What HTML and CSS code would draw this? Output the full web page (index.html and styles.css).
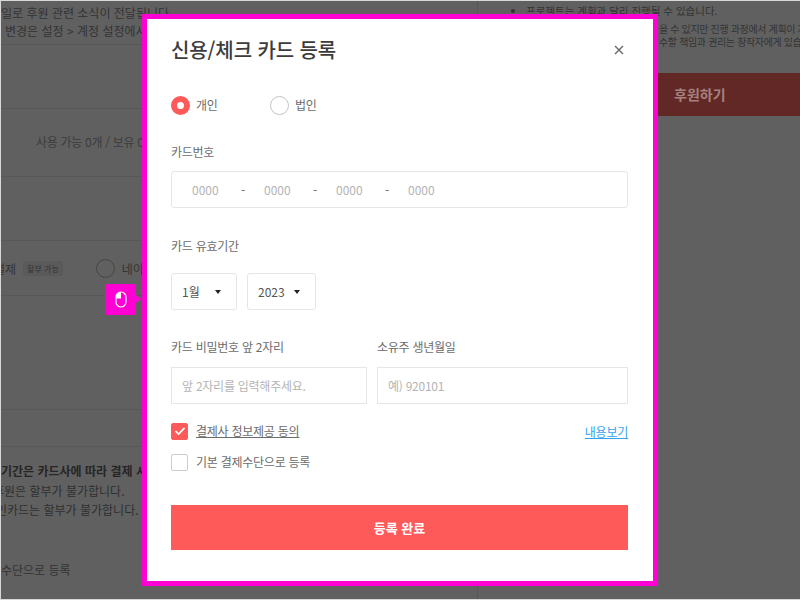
FILE: index.html
```html
<!DOCTYPE html>
<html lang="ko">
<head>
<meta charset="utf-8">
<title>신용/체크 카드 등록</title>
<link rel="stylesheet" href="styles.css">
</head>
<body>
<div class="page">
  <div class="left">
    <div class="row row-notice">
      <p>일로 후원 관련 소식이 전달됩니다.</p>
      <p class="indent">변경은 설정 &gt; 계정 설정에서 가</p>
    </div>
    <div class="row row-blank"></div>
    <div class="row row-coupon">사용 가능 0개 / 보유 0</div>
    <div class="row row-blank2"></div>
    <div class="row row-pay">
      <span class="pay-name pay-clip">결제</span>
      <span class="pay-tag">할부 가능</span>
      <span class="pay-radio"></span>
      <span class="pay-name">네이</span>
    </div>
    <div class="row row-empty"></div>
    <div class="row row-thin"></div>
    <div class="row-info">
      <p class="strong">기간은 카드사에 따라 결제 시</p>
      <p class="clip-a">후원은 할부가 불가합니다.</p>
      <p class="clip-b">인카드는 할부가 불가합니다.</p>
    </div>
    <p class="register">수단으로 등록</p>
  </div>
  <div class="right">
    <ul class="right-list">
      <li>프로젝트는 계획과 달리 진행될 수 있습니다.</li>
    </ul>
    <p class="right-note">을 수 있지만 진행 과정에서 계획이 지</p>
    <p class="right-note">수할 책임과 권리는 창작자에게 있습니</p>
    <div class="back-btn"><span>후원하기</span></div>
  </div>
</div>

<div class="badge">
  <svg width="12" height="17" viewBox="0 0 12 17" fill="none">
    <rect x="1" y="1" width="10" height="15" rx="5" stroke="#fff" stroke-width="1.2"/>
    <path d="M6 1 A5 5 0 0 0 1 6 V7.5 H6 Z" fill="#fff"/>
  </svg>
</div>

<div class="modal">
  <div class="modal-head">
    <h1 class="title">신용/체크 카드 등록</h1>
    <svg class="close" width="10" height="10" viewBox="0 0 10 10">
      <path d="M1 1 L9 9 M9 1 L1 9" stroke="#666" stroke-width="1.4"/>
    </svg>
  </div>

  <div class="radios">
    <span class="radio-item radio-first"><span class="radio on"></span>개인</span>
    <span class="radio-item"><span class="radio"></span>법인</span>
  </div>

  <div class="label label-card">카드번호</div>
  <div class="card-box">
    <span class="digits">0000</span><span class="dash">-</span>
    <span class="digits">0000</span><span class="dash">-</span>
    <span class="digits">0000</span><span class="dash">-</span>
    <span class="digits">0000</span>
  </div>

  <div class="label label-exp">카드 유효기간</div>
  <div class="selects">
    <div class="select select-m"><span>1월</span><i class="caret"></i></div>
    <div class="select select-y"><span>2023</span><i class="caret"></i></div>
  </div>

  <div class="pair">
    <div class="pair-a">
      <div class="label">카드 비밀번호 앞 2자리</div>
      <div class="input">앞 2자리를 입력해주세요.</div>
    </div>
    <div class="pair-b">
      <div class="label">소유주 생년월일</div>
      <div class="input">예) 920101</div>
    </div>
  </div>

  <div class="check-row check-first">
    <span class="check on">
      <svg width="12" height="10" viewBox="0 0 12 10" fill="none"><path d="M1.5 5 L4.6 8 L10.5 1.8" stroke="#fff" stroke-width="1.7"/></svg>
    </span>
    <span class="check-text underline">결제사 정보제공 동의</span>
    <a class="more">내용보기</a>
  </div>
  <div class="check-row check-second">
    <span class="check"></span>
    <span class="check-text">기본 결제수단으로 등록</span>
  </div>

  <div class="submit">등록 완료</div>
</div>
</body>
</html>
```
FILE: styles.css
```css
* { box-sizing: border-box; }
html, body { margin: 0; padding: 0; }
body {
  width: 800px;
  height: 600px;
  overflow: hidden;
  position: relative;
  background: #606060;
  font-family: "Noto Sans CJK KR", "Noto Sans", sans-serif;
  color: #3a3a3a;
}
p { margin: 0; }

.page {
  display: flex;
  width: 800px;
  height: 600px;
  border-top: 1px solid #d8d8d8;
  border-left: 1px solid #d8d8d8;
  border-bottom: 1px solid #d8d8d8;
}
.left {
  width: 477px;
  flex: none;
  border-right: 1px solid #565656;
  overflow: hidden;
  font-size: 12px;
}
.row { border-bottom: 1px solid #585858; }
.row-notice {
  height: 44px;
  padding-top: 2px;
  font-size: 12px;
  line-height: 20px;
  color: #333;
  white-space: nowrap;
}
.indent { padding-left: 4px; line-height: 15px; }
.row-blank { height: 64px; }
.row-coupon {
  height: 68px;
  padding: 24px 0 0 35px;
  font-size: 12px;
  line-height: 18px;
  letter-spacing: -0.3px;
  color: #3c3c3c;
  white-space: nowrap;
}
.row-blank2 { height: 64px; }
.row-pay {
  height: 55px;
  display: flex;
  align-items: center;
  white-space: nowrap;
}
.pay-name { font-size: 12px; color: #333; }
.pay-clip { margin-left: -7px; }
.pay-tag {
  margin-left: 7px;
  padding: 0 4px;
  height: 15px;
  line-height: 15px;
  font-size: 8px;
  background: #5a5a5a;
  border-radius: 2px;
  color: #333;
}
.pay-radio {
  width: 19px;
  height: 19px;
  margin: 0 7px 0 33px;
  border: 1px solid #454545;
  border-radius: 50%;
}
.row-empty { height: 114px; }
.row-thin { height: 37px; }
.row-info {
  padding-top: 14px;
  font-size: 12px;
  color: #2f2f2f;
  white-space: nowrap;
}
.row-info p { height: 19.5px; line-height: 19.5px; }
.clip-a { margin-left: -8px; }
.clip-b { margin-left: -5px; }
.strong { font-weight: 700; color: #262626; }
.register {
  margin-top: 41px;
  font-size: 12px;
  line-height: 18px;
  color: #333;
}

.right {
  flex: 1;
  overflow: hidden;
  font-size: 10.5px;
  line-height: 13px;
  color: #333;
  white-space: nowrap;
}
.right-list { margin: 3px 0 5px; padding: 0 0 0 48px; }
.right-note {
  padding-left: 181px;
  font-size: 10px;
  letter-spacing: -0.35px;
}
.back-btn {
  margin-top: 25px;
  height: 43px;
  background: #622825;
  padding: 0 0 0 196px;
  line-height: 43px;
  font-size: 14px;
  font-weight: 700;
  color: #a5827f;
}

.badge {
  position: absolute;
  left: 105px;
  top: 284px;
  width: 31px;
  height: 31px;
  background: #ff00d4;
  border-radius: 3px;
  display: flex;
  align-items: center;
  justify-content: center;
}
.badge::after {
  content: "";
  position: absolute;
  left: 30px;
  top: 10px;
  border-left: 6px solid #ff00d4;
  border-top: 5px solid transparent;
  border-bottom: 5px solid transparent;
}

.modal {
  position: absolute;
  left: 142px;
  top: 14px;
  width: 516px;
  height: 572px;
  border: 5px solid #ff00d4;
  background: #fff;
  padding: 0 25px 0 24px;
  color: #6c6c6c;
  font-size: 12px;
  letter-spacing: -0.25px;
}
.modal-head {
  display: flex;
  align-items: center;
  justify-content: space-between;
  height: 30px;
  margin-top: 16px;
  padding-right: 4px;
}
.title {
  margin: 0;
  font-size: 20px;
  font-weight: 500;
  color: #3c3c3c;
  line-height: 30px;
  letter-spacing: -0.1px;
}
.radios {
  display: flex;
  margin-top: 30px;
  height: 20px;
}
.radio-item {
  display: flex;
  align-items: center;
  gap: 6px;
  line-height: 20px;
}
.radio-first { width: 99px; }
.radio {
  width: 19px;
  height: 19px;
  border: 1px solid #c4c4c4;
  border-radius: 50%;
}
.radio.on { border: 6px solid #ff5a5a; }

.label { line-height: 18px; height: 18px; color: #6c6c6c; }
.label-card { margin-top: 28px; }
.card-box {
  margin-top: 10px;
  height: 37px;
  display: flex;
  align-items: center;
  border: 1px solid #e6e6e6;
  border-radius: 3px;
  padding-left: 20px;
  color: #b4b4b4;
  letter-spacing: 0;
}
.digits { width: 26px; }
.dash { width: 46px; padding-left: 23px; color: #666; }

.label-exp { margin-top: 29px; }
.selects { display: flex; gap: 10px; margin-top: 18px; }
.select {
  height: 37px;
  border: 1px solid #e6e6e6;
  border-radius: 3px;
  display: flex;
  align-items: center;
  justify-content: space-between;
  padding: 0 15px 0 10px;
  color: #555;
  letter-spacing: 0;
}
.select-m { width: 66px; }
.select-y { width: 69px; }
.caret {
  width: 0;
  height: 0;
  border-top: 4px solid #222;
  border-left: 3.5px solid transparent;
  border-right: 3.5px solid transparent;
}

.pair { display: flex; gap: 10px; margin-top: 28px; }
.pair-a { width: 196px; }
.pair-b { width: 251px; }
.input {
  margin-top: 11px;
  height: 37px;
  line-height: 35px;
  border: 1px solid #e6e6e6;
  padding-left: 10px;
  color: #b4b4b4;
}

.check-row { display: flex; align-items: center; height: 18px; }
.check-first { margin-top: 18px; }
.check-second { margin-top: 13px; }
.check {
  width: 17px;
  height: 17px;
  flex: none;
  border: 1px solid #ccc;
  border-radius: 2px;
  display: flex;
  align-items: center;
  justify-content: center;
}
.check.on { background: #ff5a5a; border-color: #ff5a5a; }
.check-text { margin-left: 8px; line-height: 18px; }
.underline { text-decoration: underline; }
.more {
  margin-left: auto;
  color: #36a3ee;
  text-decoration: underline;
}
.submit {
  margin-top: 34px;
  height: 45px;
  line-height: 45px;
  text-align: center;
  background: #ff5a5a;
  color: #fff;
  font-size: 13px;
  font-weight: 700;
  letter-spacing: 0;
}
```
